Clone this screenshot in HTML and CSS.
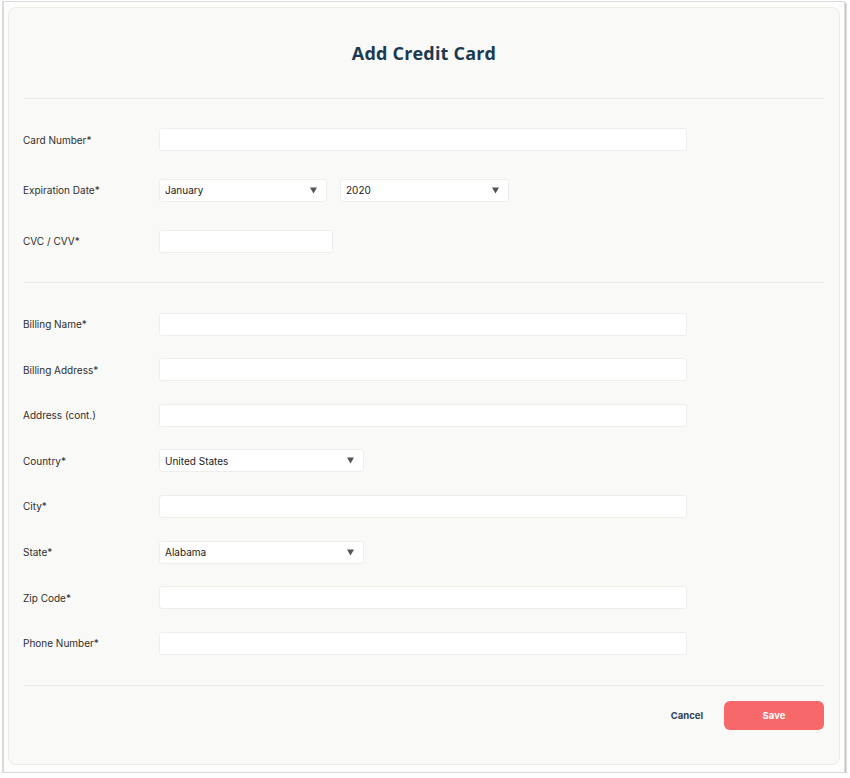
FILE: index.html
```html
<!DOCTYPE html>
<html>
<head>
<meta charset="utf-8">
<link rel="stylesheet" href="styles.css">
</head>
<body>
<div class="frame">
  <div class="card">
    <div class="header"><h1 class="title">Add Credit Card</h1></div>
    <div class="section section-card">
      <div class="row">
        <label class="label">Card Number*</label>
        <div class="field field-wide"></div>
      </div>
      <div class="row">
        <label class="label">Expiration Date*</label>
        <div class="pair">
          <div class="field select select-month"><span>January</span><svg class="arrow" width="8" height="7" viewBox="0 0 8 7"><path d="M0 0H8L4 7Z"/></svg></div>
          <div class="field select select-year"><span>2020</span><svg class="arrow" width="8" height="7" viewBox="0 0 8 7"><path d="M0 0H8L4 7Z"/></svg></div>
        </div>
      </div>
      <div class="row">
        <label class="label">CVC / CVV*</label>
        <div class="field field-cvc"></div>
      </div>
    </div>
    <div class="section section-billing">
      <div class="row"><label class="label">Billing Name*</label><div class="field field-wide"></div></div>
      <div class="row"><label class="label">Billing Address*</label><div class="field field-wide"></div></div>
      <div class="row"><label class="label">Address (cont.)</label><div class="field field-wide"></div></div>
      <div class="row"><label class="label">Country*</label><div class="field select select-mid"><span>United States</span><svg class="arrow" width="8" height="7" viewBox="0 0 8 7"><path d="M0 0H8L4 7Z"/></svg></div></div>
      <div class="row"><label class="label">City*</label><div class="field field-wide"></div></div>
      <div class="row"><label class="label">State*</label><div class="field select select-mid"><span>Alabama</span><svg class="arrow" width="8" height="7" viewBox="0 0 8 7"><path d="M0 0H8L4 7Z"/></svg></div></div>
      <div class="row"><label class="label">Zip Code*</label><div class="field field-wide"></div></div>
      <div class="row"><label class="label">Phone Number*</label><div class="field field-wide"></div></div>
    </div>
    <div class="footer">
      <button class="btn-cancel">Cancel</button>
      <button class="btn-save">Save</button>
    </div>
  </div>
</div>
</body>
</html>
```
FILE: styles.css
```css
html, body {
  margin: 0;
  padding: 0;
  background: #ffffff;
}
body {
  font-family: Inter, "Liberation Sans", sans-serif;
}
.frame {
  box-sizing: border-box;
  margin: 1px 5px 0 2px;
  height: 772px;
  border: 1px solid #d8dcdc;
  border-left-width: 2px;
  background: #fdfdfc;
  padding: 5px 4px 7px 4px;
  box-shadow: 1px 2px 2px rgba(0, 0, 0, 0.35);
}
.card {
  box-sizing: border-box;
  height: 100%;
  border: 1px solid #ebebe7;
  border-radius: 8px;
  background: #f9f9f7;
  padding: 0 15px;
}
.header {
  height: 90px;
  display: flex;
  align-items: center;
  justify-content: center;
  border-bottom: 1px solid #e9e9e5;
}
.title {
  margin: 0;
  font-family: "Open Sans", sans-serif;
  font-weight: 700;
  font-size: 18px;
  color: #1b3950;
  letter-spacing: 0.2px;
}
.section {
  display: flex;
  flex-direction: column;
  border-bottom: 1px solid #e9e9e5;
}
.section-card {
  padding: 29px 0 29px;
  gap: 27.8px;
}
.section-billing {
  padding: 30px 0 30px;
  gap: 22.6px;
}
.row {
  display: grid;
  grid-template-columns: 135px 1fr;
  align-items: center;
  height: 23px;
}
.label {
  font-size: 10px;
  color: #2e2e2e;
  margin-left: -1px;
}
.field {
  box-sizing: border-box;
  height: 23px;
  background: #ffffff;
  border: 1px solid #eeeeeb;
  border-radius: 3px;
}
.field-wide { width: 528px; }
.field-cvc { width: 174px; }
.pair {
  display: flex;
  gap: 13px;
}
.select {
  display: flex;
  align-items: center;
  justify-content: space-between;
  padding: 0 9px 0 5px;
  font-size: 10px;
  color: #222;
}
.select-month { width: 168px; }
.select-year { width: 169px; }
.select-mid { width: 205px; }
.arrow {
  fill: #555555;
  width: 7px;
  height: 7px;
}
.footer {
  display: flex;
  justify-content: flex-end;
  align-items: center;
  padding-top: 15px;
}
.btn-cancel {
  background: none;
  border: none;
  padding: 0;
  margin-right: 21px;
  font-family: Inter, "Liberation Sans", sans-serif;
  font-size: 9.5px;
  font-weight: 700;
  color: #2c4257;
}
.btn-save {
  width: 100px;
  height: 29px;
  border: none;
  border-radius: 6px;
  background: #f7686b;
  color: #ffffff;
  font-family: Inter, "Liberation Sans", sans-serif;
  font-size: 9.5px;
  font-weight: 700;
}
```
